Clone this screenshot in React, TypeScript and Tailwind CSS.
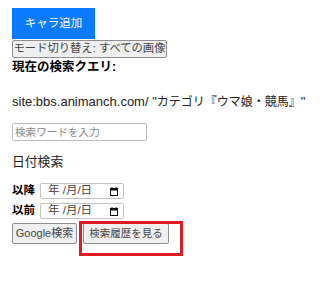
const jp = { fontFamily: '"Liberation Sans", "Noto Sans CJK JP", sans-serif' };

function CalendarIcon() {
  return (
    <svg width="8" height="9" viewBox="0 0 8 9" className="block">
      <rect x="0.5" y="1.5" width="7" height="7" fill="none" stroke="#111" strokeWidth="1" />
      <rect x="0.5" y="1.5" width="7" height="2" fill="#111" />
      <rect x="1.5" y="0" width="1" height="2" fill="#111" />
      <rect x="5.5" y="0" width="1" height="2" fill="#111" />
    </svg>
  );
}

function DateBox() {
  return (
    <div className="h-[16px] w-[84px] border border-[#c4c4c4] rounded-[2px] bg-white flex items-center pl-[7px] pr-[4px] text-[11.5px] text-[#444]">
      <span className="leading-none">年&nbsp;/月/日</span>
      <span className="ml-auto mr-[1px]">
        <CalendarIcon />
      </span>
    </div>
  );
}

export default function App() {
  return (
    <div className="px-3 pt-2 pb-[50px] text-black bg-white" style={jp}>
      <button className="bg-[#0a7bff] text-white text-[11.5px] w-[83px] h-[31px] block">キャラ追加</button>
      <button className="block mt-px border border-[#8f8f8f] rounded-[2px] bg-[#efefef] text-[11.3px] w-[155px] h-[18px] leading-none text-[#444]">
        モード切り替え: すべての画像
      </button>
      <div className="font-bold text-[12.5px] leading-[18px]">現在の検索クエリ:</div>
      <p className="text-[13px] mt-[17px] leading-[18px] text-[#222] whitespace-nowrap">
        site:bbs.animanch.com/ "<span className="text-[12px]">カテゴリ『ウマ娘・競馬』</span>"
      </p>
      <input
        className="block mt-[12px] w-[135px] h-[18px] border border-[#bdbdbd] rounded-[2px] text-[10.6px] px-[2px] placeholder:text-[#8a8a8a]"
        placeholder="検索ワードを入力"
      />
      <p className="text-[12.8px] mt-[12px] leading-[18px] text-[#222]">日付検索</p>
      <div className="mt-[12px] flex flex-col gap-[4px]">
        <div className="flex items-center gap-[5px] h-[16px]">
          <span className="font-bold text-[11.5px] leading-none">以降</span>
          <DateBox />
        </div>
        <div className="flex items-center gap-[5px] h-[16px]">
          <span className="font-bold text-[11.5px] leading-none">以前</span>
          <DateBox />
        </div>
      </div>
      <div className="relative mt-[4px] h-[21px]">
        <div className="flex gap-[6px]">
          <button className="border border-[#8f8f8f] rounded-[2px] bg-[#efefef] text-[11px] w-[65px] h-[21px] text-[#444]">Google検索</button>
          <button className="border border-[#8f8f8f] rounded-[2px] bg-[#efefef] text-[10.5px] w-[86px] h-[21px] text-[#444]">検索履歴を見る</button>
        </div>
        <div className="absolute z-10 left-[67px] -top-[2px] w-[104px] h-[35px] border-solid border-[3px] border-[#e01b22] pointer-events-none" />
      </div>
    </div>
  );
}
